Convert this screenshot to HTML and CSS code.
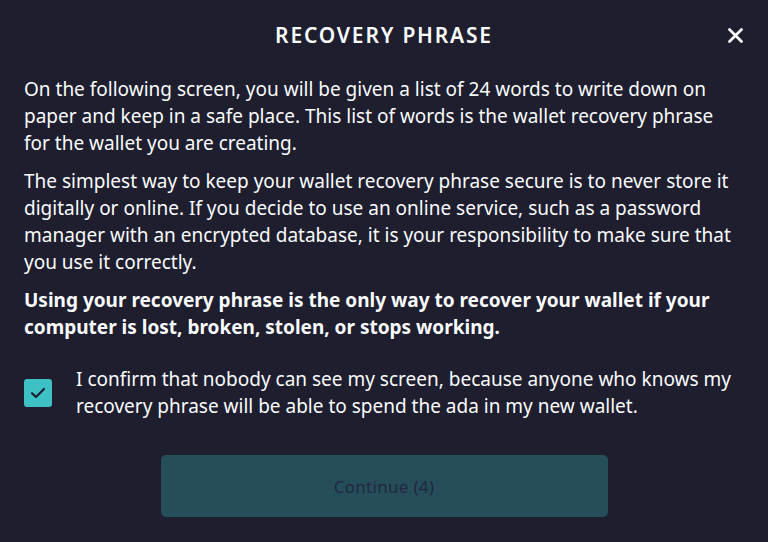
FILE: index.html
```html
<!DOCTYPE html>
<html lang="en">
<head>
  <meta charset="UTF-8">
  <title>Recovery phrase</title>
  <link rel="stylesheet" href="styles.css">
</head>
<body>
  <div class="dialog">
    <div class="dialog-head">
      <h1>RECOVERY PHRASE</h1>
      <button class="close-btn" aria-label="Close">
        <svg width="15" height="15" viewBox="0 0 15 15"><path d="M1.5 1.5 L13.5 13.5 M13.5 1.5 L1.5 13.5" stroke="#fff" stroke-width="2.7" stroke-linecap="round"/></svg>
      </button>
    </div>

    <p>On the following screen, you will be given a list of 24 words to write down on paper and keep in a safe place. This list of words is the wallet recovery phrase for the wallet you are creating.</p>
    <p>The simplest way to keep your wallet recovery phrase secure is to never store it digitally or online. If you decide to use an online service, such as a password manager with an encrypted database, it is your responsibility to make sure that you use it correctly.</p>
    <p class="strong">Using your recovery phrase is the only way to recover your wallet if your computer is lost, broken, stolen, or stops working.</p>

    <label class="confirm">
      <span class="checkbox">
        <svg width="16" height="12" viewBox="0 0 16 12"><path d="M2 6.2 L6 10 L14 2" fill="none" stroke="#1e1e2f" stroke-width="2.2" stroke-linecap="round" stroke-linejoin="round"/></svg>
      </span>
      <span class="confirm-text">I confirm that nobody can see my screen, because anyone who knows my recovery phrase will be able to spend the ada in my new wallet.</span>
    </label>

    <div class="actions">
      <button class="continue-btn" disabled>Continue (4)</button>
    </div>
  </div>
</body>
</html>
```

FILE: styles.css
```css
body {
  margin: 0;
  background-color: #1e1e2f;
  font-family: 'Noto Sans', sans-serif;
  color: #fafbfc;
}
.dialog {
  padding: 20px 24px 24px;
}
.dialog-head {
  position: relative;
  text-align: center;
  margin-bottom: 26px;
}
.dialog-head h1 {
  margin: 0;
  font-size: 21px;
  font-weight: 600;
  letter-spacing: 1.8px;
  line-height: 30px;
}
.close-btn {
  position: absolute;
  right: 1px;
  top: 8px;
  background: transparent;
  border: none;
  padding: 0;
  cursor: pointer;
  line-height: 0;
}
p {
  margin: 0 0 11px;
  font-size: 19px;
  line-height: 27px;
}
p.strong {
  font-weight: 700;
}
.confirm {
  display: flex;
  align-items: center;
  gap: 24px;
  margin-top: 25px;
}
.checkbox {
  flex: none;
  width: 28px;
  height: 28px;
  border-radius: 3px;
  background-color: #3dc1c4;
  display: flex;
  align-items: center;
  justify-content: center;
}
.confirm-text {
  font-size: 19px;
  line-height: 27px;
}
.actions {
  display: flex;
  justify-content: center;
  margin-top: 35px;
}
.continue-btn {
  width: 447px;
  height: 62px;
  border: none;
  border-radius: 5px;
  background-color: #254e5a;
  color: #232740;
  font-family: 'Noto Sans', sans-serif;
  font-size: 17px;
  letter-spacing: 0.3px;
}
```
